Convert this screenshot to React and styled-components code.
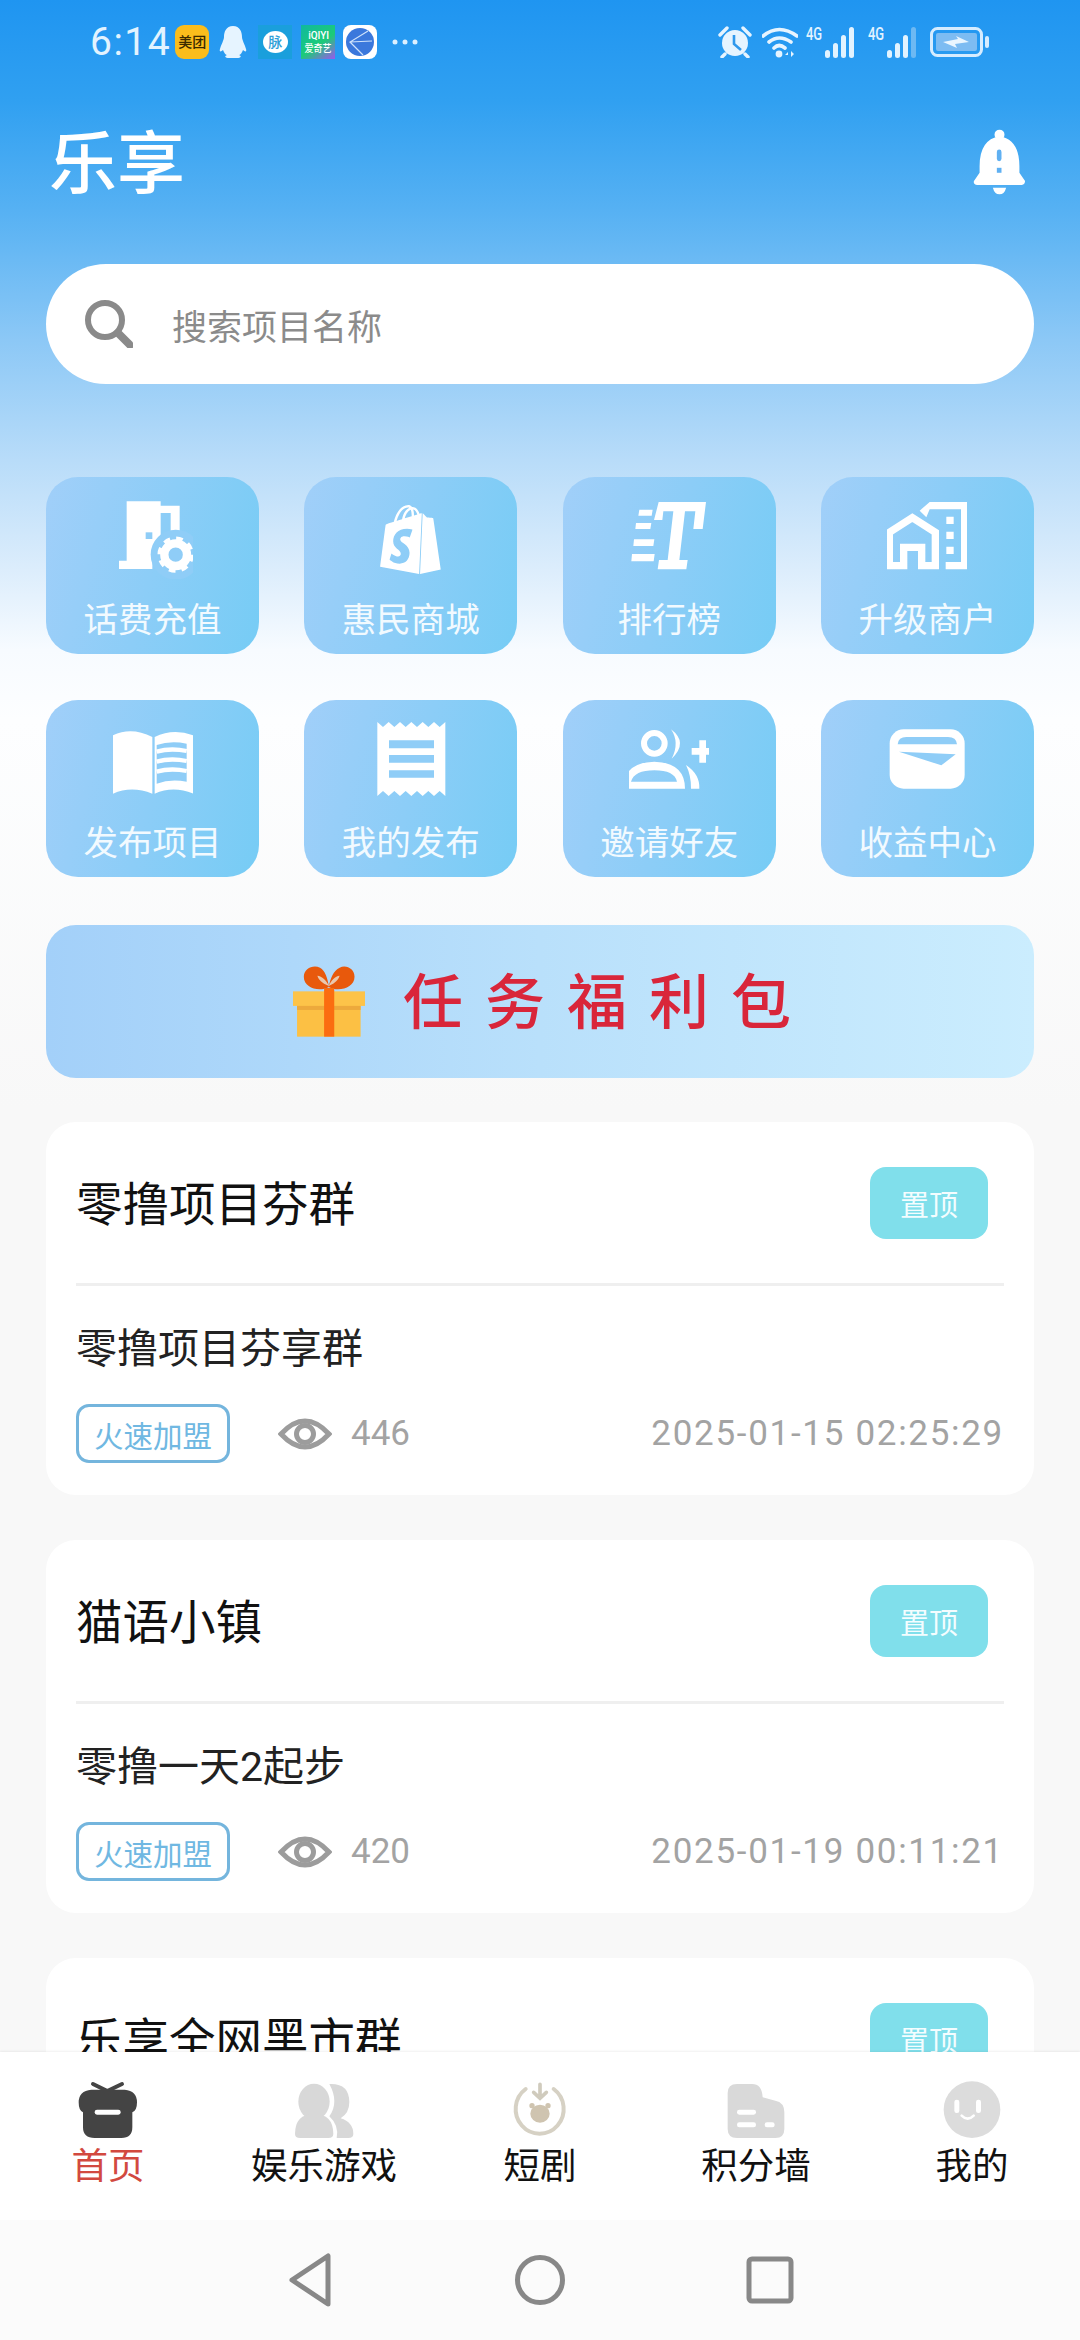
import React from "react";
import styled, { createGlobalStyle } from "styled-components";
import { SiShopify } from "react-icons/si";

const FONT = `Roboto, "Noto Sans CJK SC", "Noto Sans", sans-serif`;

const GlobalStyle = createGlobalStyle`
  html, body { margin: 0; padding: 0; background: #f8f8f8; }
  * { box-sizing: border-box; }
`;

const Phone = styled.div`
  display: flex;
  flex-direction: column;
  width: 1080px;
  height: 2340px;
  overflow: hidden;
  font-family: ${FONT};
  background: linear-gradient(180deg, #1f95f1 0, #30a0f1 100px, #56b1f3 210px, #8cc8f6 340px, #b8dcf9 460px, #dcedfc 570px, #f7fbff 650px, #fdfeff 720px, #f8f8f8 1110px);
`;

const Scroller = styled.div`
  flex: 1;
  min-height: 0;
  overflow: hidden;
`;

/* status bar */
const StatusBar = styled.div`
  display: flex;
  align-items: center;
  justify-content: space-between;
  height: 84px;
  padding: 0 90px;
`;
const StatusGroup = styled.div`
  display: flex;
  align-items: center;
  gap: ${(p) => p.$gap || 9}px;
`;
const Clock = styled.span`
  margin-right: -5px;
  font-size: 39px;
  color: #e2f3ff;
  letter-spacing: 1.5px;
  line-height: 1;
`;
const AppTile = styled.div`
  display: flex;
  flex-direction: column;
  align-items: center;
  justify-content: center;
  width: 34px;
  height: 34px;
  margin-left: ${(p) => p.$ml || 0}px;
  border-radius: ${(p) => p.$radius || 0}px;
  background: ${(p) => p.$bg};
  color: ${(p) => p.$color || "#fff"};
  font-size: 14px;
  font-weight: 500;
  line-height: 1;
  white-space: nowrap;
`;
const TinyLine = styled.span`
  font-size: ${(p) => p.$size}px;
  line-height: 13px;
  transform: scaleX(0.9);
`;
const Bubble = styled.div`
  display: flex;
  align-items: center;
  justify-content: center;
  width: 25px;
  height: 22px;
  border-radius: 50%;
  background: #fff;
  color: #2d9ed8;
  font-size: 14px;
`;
const StatusSvg = styled.svg`
  display: block;
  flex: none;
  margin-left: ${(p) => p.$ml || 0}px;
`;
const Signal = styled.div`
  display: flex;
  align-items: flex-start;
  width: 50px;
  height: 32px;
  margin-left: ${(p) => p.$ml || 0}px;
`;
const SignalLabel = styled.span`
  width: 18px;
  font-size: 18px;
  font-weight: 500;
  line-height: 16px;
  color: #e2f3ff;
  transform: scaleX(0.72);
  transform-origin: left;
`;

/* header */
const Header = styled.div`
  display: flex;
  align-items: center;
  justify-content: space-between;
  height: 156px;
  padding: 0 52px 0 49px;
`;
const Title = styled.h1`
  margin: 6px 0 0;
  font-size: 68px;
  font-weight: 500;
  line-height: 1;
  color: #fff;
`;

/* search */
const SearchBox = styled.div`
  display: flex;
  align-items: center;
  gap: 39px;
  height: 120px;
  margin: 24px 46px 0;
  padding: 0 0 0 38px;
  border-radius: 60px;
  background: #fff;
`;
const SearchText = styled.span`
  font-size: 35px;
  color: #8b8b8b;
`;

/* shortcuts */
const ShortcutGrid = styled.div`
  display: grid;
  grid-template-columns: repeat(4, 213px);
  justify-content: space-between;
  row-gap: 46px;
  margin: 93px 46px 0;
`;
const ShortcutCard = styled.div`
  display: flex;
  flex-direction: column;
  align-items: center;
  height: 177px;
  padding-top: 22px;
  border-radius: 32px;
  background: linear-gradient(105deg, #a1cff9 0%, #8ccdf7 50%, #76ccf5 100%);
  color: #f2faff;
`;
const ShortcutIcon = styled.svg`
  display: block;
  flex: none;
  width: 80px;
  height: 80px;
`;
const ShopifyWrap = styled.div`
  display: flex;
  flex: none;
  align-items: center;
  justify-content: center;
  width: 80px;
  height: 80px;
  padding-top: 1px;
  color: #fff;
`;
const ShortcutLabel = styled.span`
  margin-top: 20px;
  font-size: 34.5px;
  line-height: 42px;
  white-space: nowrap;
`;

/* banner */
const Banner = styled.div`
  display: flex;
  align-items: center;
  justify-content: center;
  gap: 38px;
  height: 153px;
  margin: 48px 46px 0;
  padding-left: 4px;
  border-radius: 30px;
  background: linear-gradient(90deg, #a3d0f9 0%, #b9e0fb 50%, #cbedfe 100%);
`;
const BannerText = styled.span`
  margin: 4px -22px 0 0;
  font-size: 60px;
  font-weight: 500;
  line-height: 1;
  letter-spacing: 22px;
  color: #d9263a;
`;

/* project list */
const CardList = styled.div`
  display: flex;
  flex-direction: column;
  gap: 45px;
  margin: 44px 46px 0;
`;
const Card = styled.div`
  height: 373px;
  padding: 0 30px;
  border-radius: 30px;
  background: #fff;
`;
const CardHead = styled.div`
  display: flex;
  align-items: center;
  justify-content: space-between;
  height: 164px;
  padding-right: 16px;
  border-bottom: 3px solid #efefef;
`;
const CardTitle = styled.h2`
  margin: 6px 0 0 0;
  font-size: 46.5px;
  font-weight: 400;
  line-height: 1;
  color: #111;
`;
const PinButton = styled.div`
  display: flex;
  align-items: center;
  justify-content: center;
  width: 118px;
  height: 72px;
  border-radius: 16px;
  background: #80dfeb;
  color: #f4fdff;
  font-size: 29px;
`;
const CardBody = styled.p`
  margin: 0;
  padding-top: 38px;
  height: 118px;
  font-size: 41px;
  line-height: 50px;
  color: #222;
`;
const CardFoot = styled.div`
  display: flex;
  align-items: center;
  height: 59px;
`;
const JoinTag = styled.span`
  display: flex;
  align-items: center;
  justify-content: center;
  width: 154px;
  height: 59px;
  border: 3px solid #74b5dd;
  border-radius: 13px;
  color: #70b8e2;
  font-size: 29.5px;
`;
const EyeIcon = styled.svg`
  display: block;
  width: 54px;
  height: 38px;
  margin-left: 48px;
`;
const Views = styled.span`
  margin-left: 19px;
  font-size: 35px;
  color: #a3a3a3;
`;
const DateText = styled.span`
  margin-left: auto;
  font-size: 35px;
  letter-spacing: 1.7px;
  color: #a3a3a3;
`;

/* tab bar */
const TabBar = styled.div`
  display: grid;
  grid-template-columns: repeat(5, 1fr);
  flex: none;
  height: 168px;
  padding-top: 28px;
  background: #fff;
  box-shadow: 0 -1px 2px rgba(0, 0, 0, 0.06);
`;
const Tab = styled.div`
  display: flex;
  flex-direction: column;
  align-items: center;
`;
const TabIcon = styled.svg`
  display: block;
  width: 60px;
  height: 60px;
`;
const TabLabel = styled.span`
  margin-top: 4px;
  font-size: 36.5px;
  line-height: 46px;
  color: ${(p) => (p.$active ? "#d2493f" : "#111")};
`;

/* system nav */
const NavBar = styled.div`
  display: flex;
  flex: none;
  align-items: center;
  justify-content: center;
  gap: 174px;
  height: 120px;
  background: #fbfbfb;
`;
const NavIcon = styled.svg`
  display: block;
  width: 56px;
  height: 56px;
`;

const CARD_BLUE = "#8fcdf7";

const BuildingIcon = () => (
  <ShortcutIcon viewBox="247 115 240 240">
    <path d="M288 122H390V135H447V240H420V157H390V300H365V325H265V300H288Z" fill="#fff" />
    <rect x="345" y="215" width="20" height="20" fill={CARD_BLUE} />
    <circle cx="435" cy="282" r="75" fill={CARD_BLUE} />
    <circle cx="435" cy="282" r="34" fill="none" stroke="#fff" strokeWidth="25" />
    <circle cx="435" cy="282" r="49" fill="none" stroke="#fff" strokeWidth="11" strokeDasharray="20 18.5" />
  </ShortcutIcon>
);

const RankIcon = () => (
  <ShortcutIcon viewBox="269 115 240 240">
    <path d="M358 124H500L490 205H462L468 152H437L420 298H445L441 326H355L359 298H385L402 152H372L369 178H344Z" fill="#fff" />
    <path d="M300 147H340L337 165H297ZM290 187H336L333 205H288ZM284 236H345L342 256H282ZM278 280H346L343 302H276Z" fill="#fff" />
  </ShortcutIcon>
);

const HouseIcon = () => (
  <ShortcutIcon viewBox="1042 115 240 240">
    <path d="M1140 150L1170 124H1287V326H1218V304H1264V146H1170L1160 170Z" fill="#fff" />
    <path d="M1220 168h22v22h-22zM1220 213h22v22h-22zM1220 258h22v22h-22z" fill="#fff" />
    <path d="M1049 315V215L1118 171L1187 215V315H1146V260H1092V315Z" fill="none" stroke="#fff" strokeWidth="22" />
  </ShortcutIcon>
);

const BookIcon = () => (
  <ShortcutIcon viewBox="247 783 240 240">
    <path d="M243 825Q300 795 365 828V998Q300 972 243 1000Z" fill="#fff" />
    <path d="M372 828Q430 800 492 825V1000Q430 972 372 998Z" fill="#fff" />
    <path d="M378 852Q420 838 468 848V962Q420 952 378 968Z" fill={CARD_BLUE} />
    <path d="M378 872Q420 860 468 870M378 902Q420 890 468 900M378 932Q420 920 468 930" fill="none" stroke="#fff" strokeWidth="13" />
  </ShortcutIcon>
);

const ReceiptIcon = () => (
  <ShortcutIcon viewBox="1021 783 240 240">
    <path d="M1040 783L1057 798L1074 783L1091 798L1108 783L1125 798L1142 783L1159 798L1176 783L1193 798L1210 783L1227 798L1244 783V1005L1227 990L1210 1005L1193 990L1176 1005L1159 990L1142 1005L1125 990L1108 1005L1091 990L1074 1005L1057 990L1040 1005Z" fill="#fff" />
    <path d="M1075 838h135v24h-135zM1075 882h135v23h-135zM1075 928h135v22h-135z" fill={CARD_BLUE} />
  </ShortcutIcon>
);

const InviteIcon = () => (
  <ShortcutIcon viewBox="269 783 240 240">
    <circle cx="345" cy="847" r="31" fill="none" stroke="#fff" strokeWidth="18" />
    <path d="M395 805Q448 845 397 893Q422 845 395 805Z" fill="#fff" />
    <path fillRule="evenodd" d="M252 983Q252 905 345 902Q437 905 437 983ZM275 962H413Q405 928 345 928Q285 928 275 962Z" fill="#fff" />
    <path d="M440 912Q482 940 480 983H455Q456 945 440 912Z" fill="#fff" />
    <path d="M480 838h20v23h25v20h-25v24h-20v-24h-23v-20h23z" fill="#fff" />
  </ShortcutIcon>
);

const WalletIcon = () => (
  <ShortcutIcon viewBox="1042 783 240 240">
    <rect x="1050" y="805" width="225" height="178" rx="42" fill="#fff" />
    <path d="M1074 850Q1076 828 1100 828H1225Q1250 828 1252 850Z" fill={CARD_BLUE} />
    <path d="M1078 872L1248 880L1205 913Z" fill={CARD_BLUE} />
  </ShortcutIcon>
);

const ShopIcon = () => (
  <ShopifyWrap>
    <SiShopify size={69} />
  </ShopifyWrap>
);

const shortcuts = [
  { label: "话费充值", Icon: BuildingIcon },
  { label: "惠民商城", Icon: ShopIcon },
  { label: "排行榜", Icon: RankIcon },
  { label: "升级商户", Icon: HouseIcon },
  { label: "发布项目", Icon: BookIcon },
  { label: "我的发布", Icon: ReceiptIcon },
  { label: "邀请好友", Icon: InviteIcon },
  { label: "收益中心", Icon: WalletIcon },
];

const projects = [
  { title: "零撸项目芬群", body: "零撸项目芬享群", views: 446, date: "2025-01-15 02:25:29" },
  { title: "猫语小镇", body: "零撸一天2起步", views: 420, date: "2025-01-19 00:11:21" },
  { title: "乐享全网黑市群" },
];

const HomeTab = () => (
  <TabIcon viewBox="55 33 180 180">
    <path d="M100 45L143 66L187 45" fill="none" stroke="#444" strokeWidth="12" strokeLinecap="round" />
    <path d="M95 62H195Q232 65 232 100Q232 125 218 130V175Q218 207 185 207H105Q70 207 70 175V130Q57 125 57 100Q57 65 95 62Z" fill="#444" />
    <rect x="105" y="122" width="78" height="15" rx="7" fill="#fff" />
  </TabIcon>
);

const GameTab = () => (
  <TabIcon viewBox="702 33 180 180">
    <ellipse cx="762" cy="98" rx="47" ry="54" fill="#d8d8d8" />
    <path d="M705 195Q705 135 762 135Q820 135 820 195Q820 207 805 207H720Q705 207 705 195Z" fill="#d8d8d8" />
    <path d="M808 45Q868 42 868 100Q868 132 842 148Q880 160 880 195Q880 207 865 207H830Q838 170 808 142Q838 100 808 45Z" fill="#d8d8d8" />
  </TabIcon>
);

const DramaTab = () => (
  <TabIcon viewBox="85 33 180 180">
    <path d="M132 60A72 74 0 1 0 216 60" fill="none" stroke="#d6d1c4" strokeWidth="12" strokeLinecap="round" />
    <path d="M175 46V84M156 70L175 88L194 70" fill="none" stroke="#d0cbbd" strokeWidth="11" strokeLinecap="round" />
    <ellipse cx="175" cy="134" rx="29" ry="27" fill="#cfc4b0" />
    <circle cx="151" cy="110" r="8" fill="#cfc4b0" />
    <circle cx="199" cy="110" r="8" fill="#cfc4b0" />
  </TabIcon>
);

const PointsTab = () => (
  <TabIcon viewBox="712 33 180 180">
    <path d="M745 45H790Q820 45 822 85L860 95Q887 100 887 130V180Q887 207 860 207H745Q717 207 717 180V72Q717 45 745 45Z" fill="#d9d9d9" />
    <rect x="745" y="122" width="57" height="15" rx="7" fill="#fff" />
    <rect x="745" y="160" width="57" height="15" rx="7" fill="#fff" />
    <rect x="828" y="160" width="30" height="15" rx="7" fill="#fff" />
  </TabIcon>
);

const MineTab = () => (
  <TabIcon viewBox="1338 33 180 180">
    <circle cx="1428" cy="122" r="85" fill="#dcdcdc" />
    <rect x="1375" y="92" width="15" height="40" rx="7" fill="#fff" />
    <rect x="1440" y="92" width="15" height="40" rx="7" fill="#fff" />
    <path d="M1397 140Q1415 158 1433 140" fill="none" stroke="#fff" strokeWidth="8" strokeLinecap="round" />
  </TabIcon>
);

const tabs = [
  { label: "首页", Icon: HomeTab, active: true },
  { label: "娱乐游戏", Icon: GameTab },
  { label: "短剧", Icon: DramaTab },
  { label: "积分墙", Icon: PointsTab },
  { label: "我的", Icon: MineTab },
];

const SignalBars = ({ faded }) => (
  <svg width="32" height="32" viewBox="0 0 32 32">
    <rect x="1" y="24" width="5" height="8" rx="2.5" fill="#e2f3ff" />
    <rect x="9" y="17" width="5" height="15" rx="2.5" fill="#e2f3ff" />
    <rect x="17" y="9" width="5" height="23" rx="2.5" fill="#e2f3ff" />
    <rect x="25" y="1" width="5" height="31" rx="2.5" fill={faded ? "#6db9f3" : "#e2f3ff"} />
  </svg>
);

export default function App() {
  return (
    <Phone>
      <GlobalStyle />
      <StatusBar>
        <StatusGroup>
          <Clock>6:14</Clock>
          <AppTile $bg="#fbbd1c" $radius={9} $color="#3a2a00">美团</AppTile>
          <StatusSvg width="30" height="34" viewBox="0 0 30 34">
            <path d="M15 1C8 1 6 7 6 12C6 15 3 20 2 24C1 27 3 27 5 25C6 28 8 30 9 30C6 31 7 33 11 33H19C23 33 24 31 21 30C22 30 24 28 25 25C27 27 29 27 28 24C27 20 24 15 24 12C24 7 22 1 15 1Z" fill="#e6f4ff" />
          </StatusSvg>
          <AppTile $bg="#1a9fdc" $ml={1}>
            <Bubble>脉</Bubble>
          </AppTile>
          <AppTile $bg="linear-gradient(145deg, #10b8a0 0%, #1ccb78 55%, #9a58ee 100%)">
            <TinyLine $size={11}>iQIYI</TinyLine>
            <TinyLine $size={10}>爱奇艺</TinyLine>
          </AppTile>
          <AppTile $bg="#fff" $radius={8} $ml={-1}>
            <svg width="28" height="28" viewBox="0 0 28 28">
              <circle cx="14" cy="14" r="14" fill="#3b78dc" />
              <path d="M22 3L4 14L17 27M4 14L26 13" fill="none" stroke="#cfe2fb" strokeWidth="1.2" />
            </svg>
          </AppTile>
          <StatusSvg width="26" height="6" viewBox="0 0 26 6" $ml={6}>
            <circle cx="3" cy="3" r="2.5" fill="#dbefff" />
            <circle cx="13" cy="3" r="2.5" fill="#dbefff" />
            <circle cx="23" cy="3" r="2.5" fill="#dbefff" />
          </StatusSvg>
        </StatusGroup>
        <StatusGroup $gap={10}>
          <StatusSvg width="34" height="32" viewBox="0 0 34 32">
            <circle cx="17" cy="17" r="13" fill="#e6f4ff" />
            <path d="M16 9V18L23 24" fill="none" stroke="#2f98ec" strokeWidth="2.6" />
            <path d="M2 9L9 2M32 9L25 2M7 28L4 31M27 28L30 31" stroke="#e6f4ff" strokeWidth="3.4" strokeLinecap="round" />
          </StatusSvg>
          <StatusSvg width="36" height="32" viewBox="0 0 36 32">
            <path d="M1 10Q17 -3 35 10M7 16Q17 8 29 16M12 22Q17 17 23 22" fill="none" stroke="#e6f4ff" strokeWidth="3.6" strokeLinecap="round" />
            <circle cx="17" cy="28" r="3.4" fill="#e6f4ff" />
            <path d="M26 26L23 29H26ZM29 25L32 28L29 31Z" fill="#e6f4ff" />
          </StatusSvg>
          <Signal $ml={-2}>
            <SignalLabel>4G</SignalLabel>
            <SignalBars />
          </Signal>
          <Signal $ml={2}>
            <SignalLabel>4G</SignalLabel>
            <SignalBars faded />
          </Signal>
          <StatusSvg width="60" height="30" viewBox="0 0 60 30" $ml={2}>
            <rect x="1.5" y="1.5" width="50" height="27" rx="6" fill="none" stroke="#d5ecff" strokeWidth="3" />
            <rect x="6" y="6" width="41" height="18" rx="2" fill="#7dbcf2" />
            <path d="M13 15L28 12L26 9L39 15L25 17L27 21Z" fill="#eaf6ff" />
            <rect x="55" y="9" width="4" height="12" rx="2" fill="#d5ecff" />
          </StatusSvg>
        </StatusGroup>
      </StatusBar>

      <Scroller>
        <Header>
          <Title>乐享</Title>
          <svg width="57" height="68" viewBox="60 35 170 205">
            <circle cx="145" cy="55" r="15" fill="#fff" />
            <path d="M145 60Q205 70 205 150V170L222 195Q222 205 212 207H78Q65 205 68 195L85 170V150Q85 70 145 60Z" fill="#fff" />
            <path d="M125 215H165Q160 235 145 235Q130 235 125 215Z" fill="#fff" />
            <rect x="137" y="100" width="14" height="35" rx="7" fill="#5fb0f2" />
            <rect x="137" y="155" width="14" height="15" fill="#5fb0f2" />
          </svg>
        </Header>

        <SearchBox>
          <svg width="49" height="48" viewBox="0 0 49 48">
            <circle cx="21" cy="20" r="17" fill="none" stroke="#8a8a8a" strokeWidth="6" />
            <path d="M34 33L46 45" stroke="#8a8a8a" strokeWidth="8" strokeLinecap="round" />
          </svg>
          <SearchText>搜索项目名称</SearchText>
        </SearchBox>

        <ShortcutGrid>
          {shortcuts.map(({ label, Icon }) => (
            <ShortcutCard key={label}>
              <Icon />
              <ShortcutLabel>{label}</ShortcutLabel>
            </ShortcutCard>
          ))}
        </ShortcutGrid>

        <Banner>
          <svg width="72" height="71" viewBox="40 33 213 210">
            <path d="M146 95C120 110 72 100 72 65C72 40 100 28 120 38C135 46 143 70 146 95C150 70 160 46 178 38C198 28 222 42 222 65C222 100 172 110 146 95Z" fill="#e8590c" />
            <path d="M146 92C135 88 118 80 112 62C125 62 140 78 146 92ZM146 92C156 88 172 80 178 62C165 62 152 78 146 92Z" fill="#e9c8ae" />
            <rect x="52" y="140" width="188" height="102" fill="#fcc044" />
            <rect x="40" y="108" width="213" height="43" fill="#fdc349" />
            <rect x="52" y="151" width="188" height="12" fill="#eda93c" />
            <rect x="132" y="98" width="30" height="144" fill="#fb6d10" />
          </svg>
          <BannerText>任务福利包</BannerText>
        </Banner>

        <CardList>
          {projects.map((p) => (
            <Card key={p.title}>
              <CardHead>
                <CardTitle>{p.title}</CardTitle>
                <PinButton>置顶</PinButton>
              </CardHead>
              {p.body && (
                <>
                  <CardBody>{p.body}</CardBody>
                  <CardFoot>
                    <JoinTag>火速加盟</JoinTag>
                    <EyeIcon viewBox="0 0 54 38">
                      <path d="M3 19Q27 -7 51 19Q27 45 3 19Z" fill="none" stroke="#9c9c9c" strokeWidth="5" />
                      <circle cx="27" cy="19" r="8.5" fill="none" stroke="#9c9c9c" strokeWidth="5" />
                    </EyeIcon>
                    <Views>{p.views}</Views>
                    <DateText>{p.date}</DateText>
                  </CardFoot>
                </>
              )}
            </Card>
          ))}
        </CardList>
      </Scroller>

      <TabBar>
        {tabs.map(({ label, Icon, active }) => (
          <Tab key={label}>
            <Icon />
            <TabLabel $active={active}>{label}</TabLabel>
          </Tab>
        ))}
      </TabBar>

      <NavBar>
        <NavIcon viewBox="0 0 56 56">
          <path d="M46 4V52L10 28Z" fill="none" stroke="#888" strokeWidth="5" strokeLinejoin="round" />
        </NavIcon>
        <NavIcon viewBox="0 0 56 56">
          <circle cx="28" cy="28" r="22.5" fill="none" stroke="#888" strokeWidth="5" />
        </NavIcon>
        <NavIcon viewBox="0 0 56 56">
          <rect x="7" y="7" width="42" height="42" rx="3" fill="none" stroke="#888" strokeWidth="5" />
        </NavIcon>
      </NavBar>
    </Phone>
  );
}
